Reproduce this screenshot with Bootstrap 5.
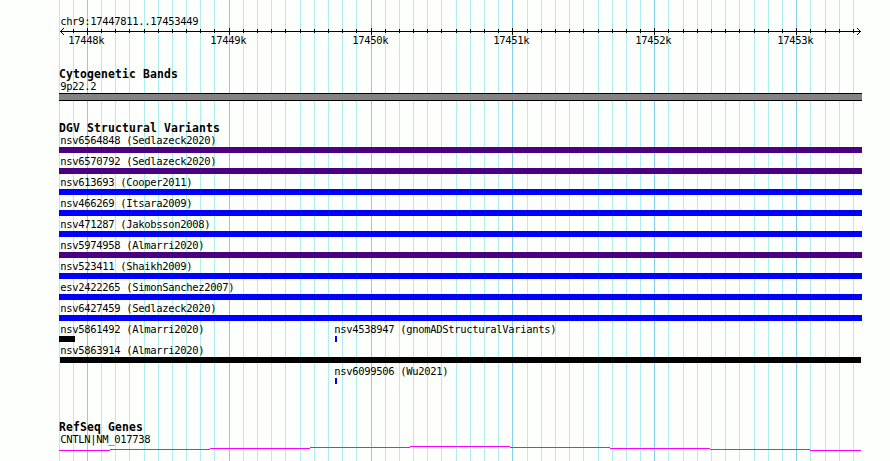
<!DOCTYPE html>
<html lang="en">
<head>
<meta charset="utf-8">
<title>chr9:17447811..17453449</title>
<link rel="stylesheet" href="https://cdn.jsdelivr.net/npm/bootstrap@5.3.0/dist/css/bootstrap.min.css">
<style>
body { background: #fdfffc; color: #000; width: 890px; height: 461px; font: 10.5px/12px "DejaVu Sans Mono", monospace; letter-spacing: -.321px; }
.browser { height: 461px; width: 890px; padding-left: 59px; }
.gridlines { z-index: 0; }
.tracks { z-index: 1; width: 803px; height: 461px; }
.lbl { height: 12px; padding-left: 1.2px; white-space: pre; }
h2.track-title { font-size: 11.4px; line-height: 12px; font-weight: 700; letter-spacing: .137px; margin: 0; height: 12px; white-space: pre; }
.region { padding-top: 15px; height: 28px; }
.scale-axis { display: block; height: 7px; }
.ticks { margin-top: -1px; height: 34px; padding-left: 9.2px; }
.ticks span { width: 36px; white-space: pre; }
.cyto { margin-top: 1px; height: 8px; background: #848284; border: solid #000; border-width: 1px 0; }
.dgv { margin-top: 21px; }
.variant { height: 21px; }
.variant .lbl { height: 13px; }
.left-col { width: 274px; }
.seg { height: 6px; }
.purple { background: #4b0082; }
.blue { background: #00f; }
.ink { background: #000; }
.inset-bar { margin: 0 1px; }
.short-bar { width: 16px; }
.tiny-bar { width: 2px; margin-left: 2px; }
.refseq { margin-top: 35px; }
.gene { display: block; height: 6px; }
</style>
<script src="https://cdn.jsdelivr.net/npm/bootstrap@5.3.0/dist/js/bootstrap.bundle.min.js"></script>
</head>
<body class="m-0 overflow-hidden">
<main class="browser position-relative overflow-hidden">
  <svg class="gridlines position-absolute top-0 start-0" width="890" height="461" shape-rendering="crispEdges" aria-hidden="true">
    <path id="minor" stroke="#afeeee" fill="none"/>
    <path id="major" stroke="#87ceeb" fill="none"/>
  </svg>
  <div class="tracks position-relative d-flex flex-column">
    <div class="region lbl">chr9:17447811..17453449</div>
    <svg class="scale-axis" width="803" height="7" shape-rendering="crispEdges" aria-hidden="true">
      <g stroke="#000" fill="none"><path d="M1 3.5H802"/><path id="minorTicks"/><path id="majorTicks"/></g>
      <path d="M2 2h1v1h-1zM3 1h1v1h-1zM4 0h1v1h-1zM2 4h1v1h-1zM3 5h1v1h-1zM4 6h1v1h-1zM800 2h1v1h-1zM799 1h1v1h-1zM798 0h1v1h-1zM800 4h1v1h-1zM799 5h1v1h-1zM798 6h1v1h-1z"/>
    </svg>
    <div class="ticks d-flex" id="tickLabels"></div>
    <section>
      <h2 class="track-title">Cytogenetic Bands</h2>
      <div class="lbl">9p22.2</div>
      <div class="cyto"></div>
    </section>
    <section class="dgv">
      <h2 class="track-title">DGV Structural Variants</h2>
      <div class="variants">
        <div class="variant"><div class="lbl">nsv6564848 (Sedlazeck2020)</div><div class="seg purple"></div></div>
        <div class="variant"><div class="lbl">nsv6570792 (Sedlazeck2020)</div><div class="seg purple"></div></div>
        <div class="variant"><div class="lbl">nsv613693 (Cooper2011)</div><div class="seg blue"></div></div>
        <div class="variant"><div class="lbl">nsv466269 (Itsara2009)</div><div class="seg blue"></div></div>
        <div class="variant"><div class="lbl">nsv471287 (Jakobsson2008)</div><div class="seg blue"></div></div>
        <div class="variant"><div class="lbl">nsv5974958 (Almarri2020)</div><div class="seg purple"></div></div>
        <div class="variant"><div class="lbl">nsv523411 (Shaikh2009)</div><div class="seg blue"></div></div>
        <div class="variant"><div class="lbl">esv2422265 (SimonSanchez2007)</div><div class="seg blue"></div></div>
        <div class="variant"><div class="lbl">nsv6427459 (Sedlazeck2020)</div><div class="seg blue"></div></div>
        <div class="variant d-flex">
          <div class="left-col"><div class="lbl">nsv5861492 (Almarri2020)</div><div class="seg ink short-bar"></div></div>
          <div><div class="lbl">nsv4538947 (gnomADStructuralVariants)</div><div class="seg blue tiny-bar"></div></div>
        </div>
        <div class="variant"><div class="lbl">nsv5863914 (Almarri2020)</div><div class="seg ink inset-bar"></div></div>
        <div class="variant d-flex">
          <div class="left-col"></div>
          <div><div class="lbl">nsv6099506 (Wu2021)</div><div class="seg blue tiny-bar"></div></div>
        </div>
      </div>
    </section>
    <section class="refseq">
      <h2 class="track-title">RefSeq Genes</h2>
      <div class="lbl">CNTLN|NM_017738</div>
      <svg class="gene" width="803" height="6" shape-rendering="crispEdges" aria-hidden="true">
        <path stroke="#f0f" fill="none" d="M0 5.5H51M51 4.5H151M151 3.5H251M251 2.5H351M351 1.5H451M451 2.5H551M551 3.5H651M651 4.5H751M751 5.5H802"/>
      </svg>
    </section>
  </div>
</main>
<script>
const major = [87, 229, 371, 512, 654, 796];
const minor = [59,73,101,115,129,144,158,172,186,200,214,243,257,271,285,300,314,328,342,356,385,399,413,427,441,456,470,484,498,527,541,555,569,583,598,612,626,640,668,683,697,711,725,739,754,768,782,810,825,839,853];
const draw = (id, xs, dx, y1, y2) => document.getElementById(id).setAttribute('d', xs.map(x => `M${x - dx + .5} ${y1}V${y2}`).join(''));
draw('minor', minor, 0, 0, 461);
draw('major', major, 0, 0, 461);
draw('minorTicks', minor.slice(1), 59, 1, 5);
draw('majorTicks', major, 59, 0, 7);
major.forEach((x, i) => {
  const s = document.createElement('span');
  s.className = 'flex-shrink-0';
  s.textContent = 17448 + i + 'k';
  if (i) s.style.marginLeft = x - major[i - 1] - 36 + 'px';
  document.getElementById('tickLabels').append(s);
});
</script>
</body>
</html>
